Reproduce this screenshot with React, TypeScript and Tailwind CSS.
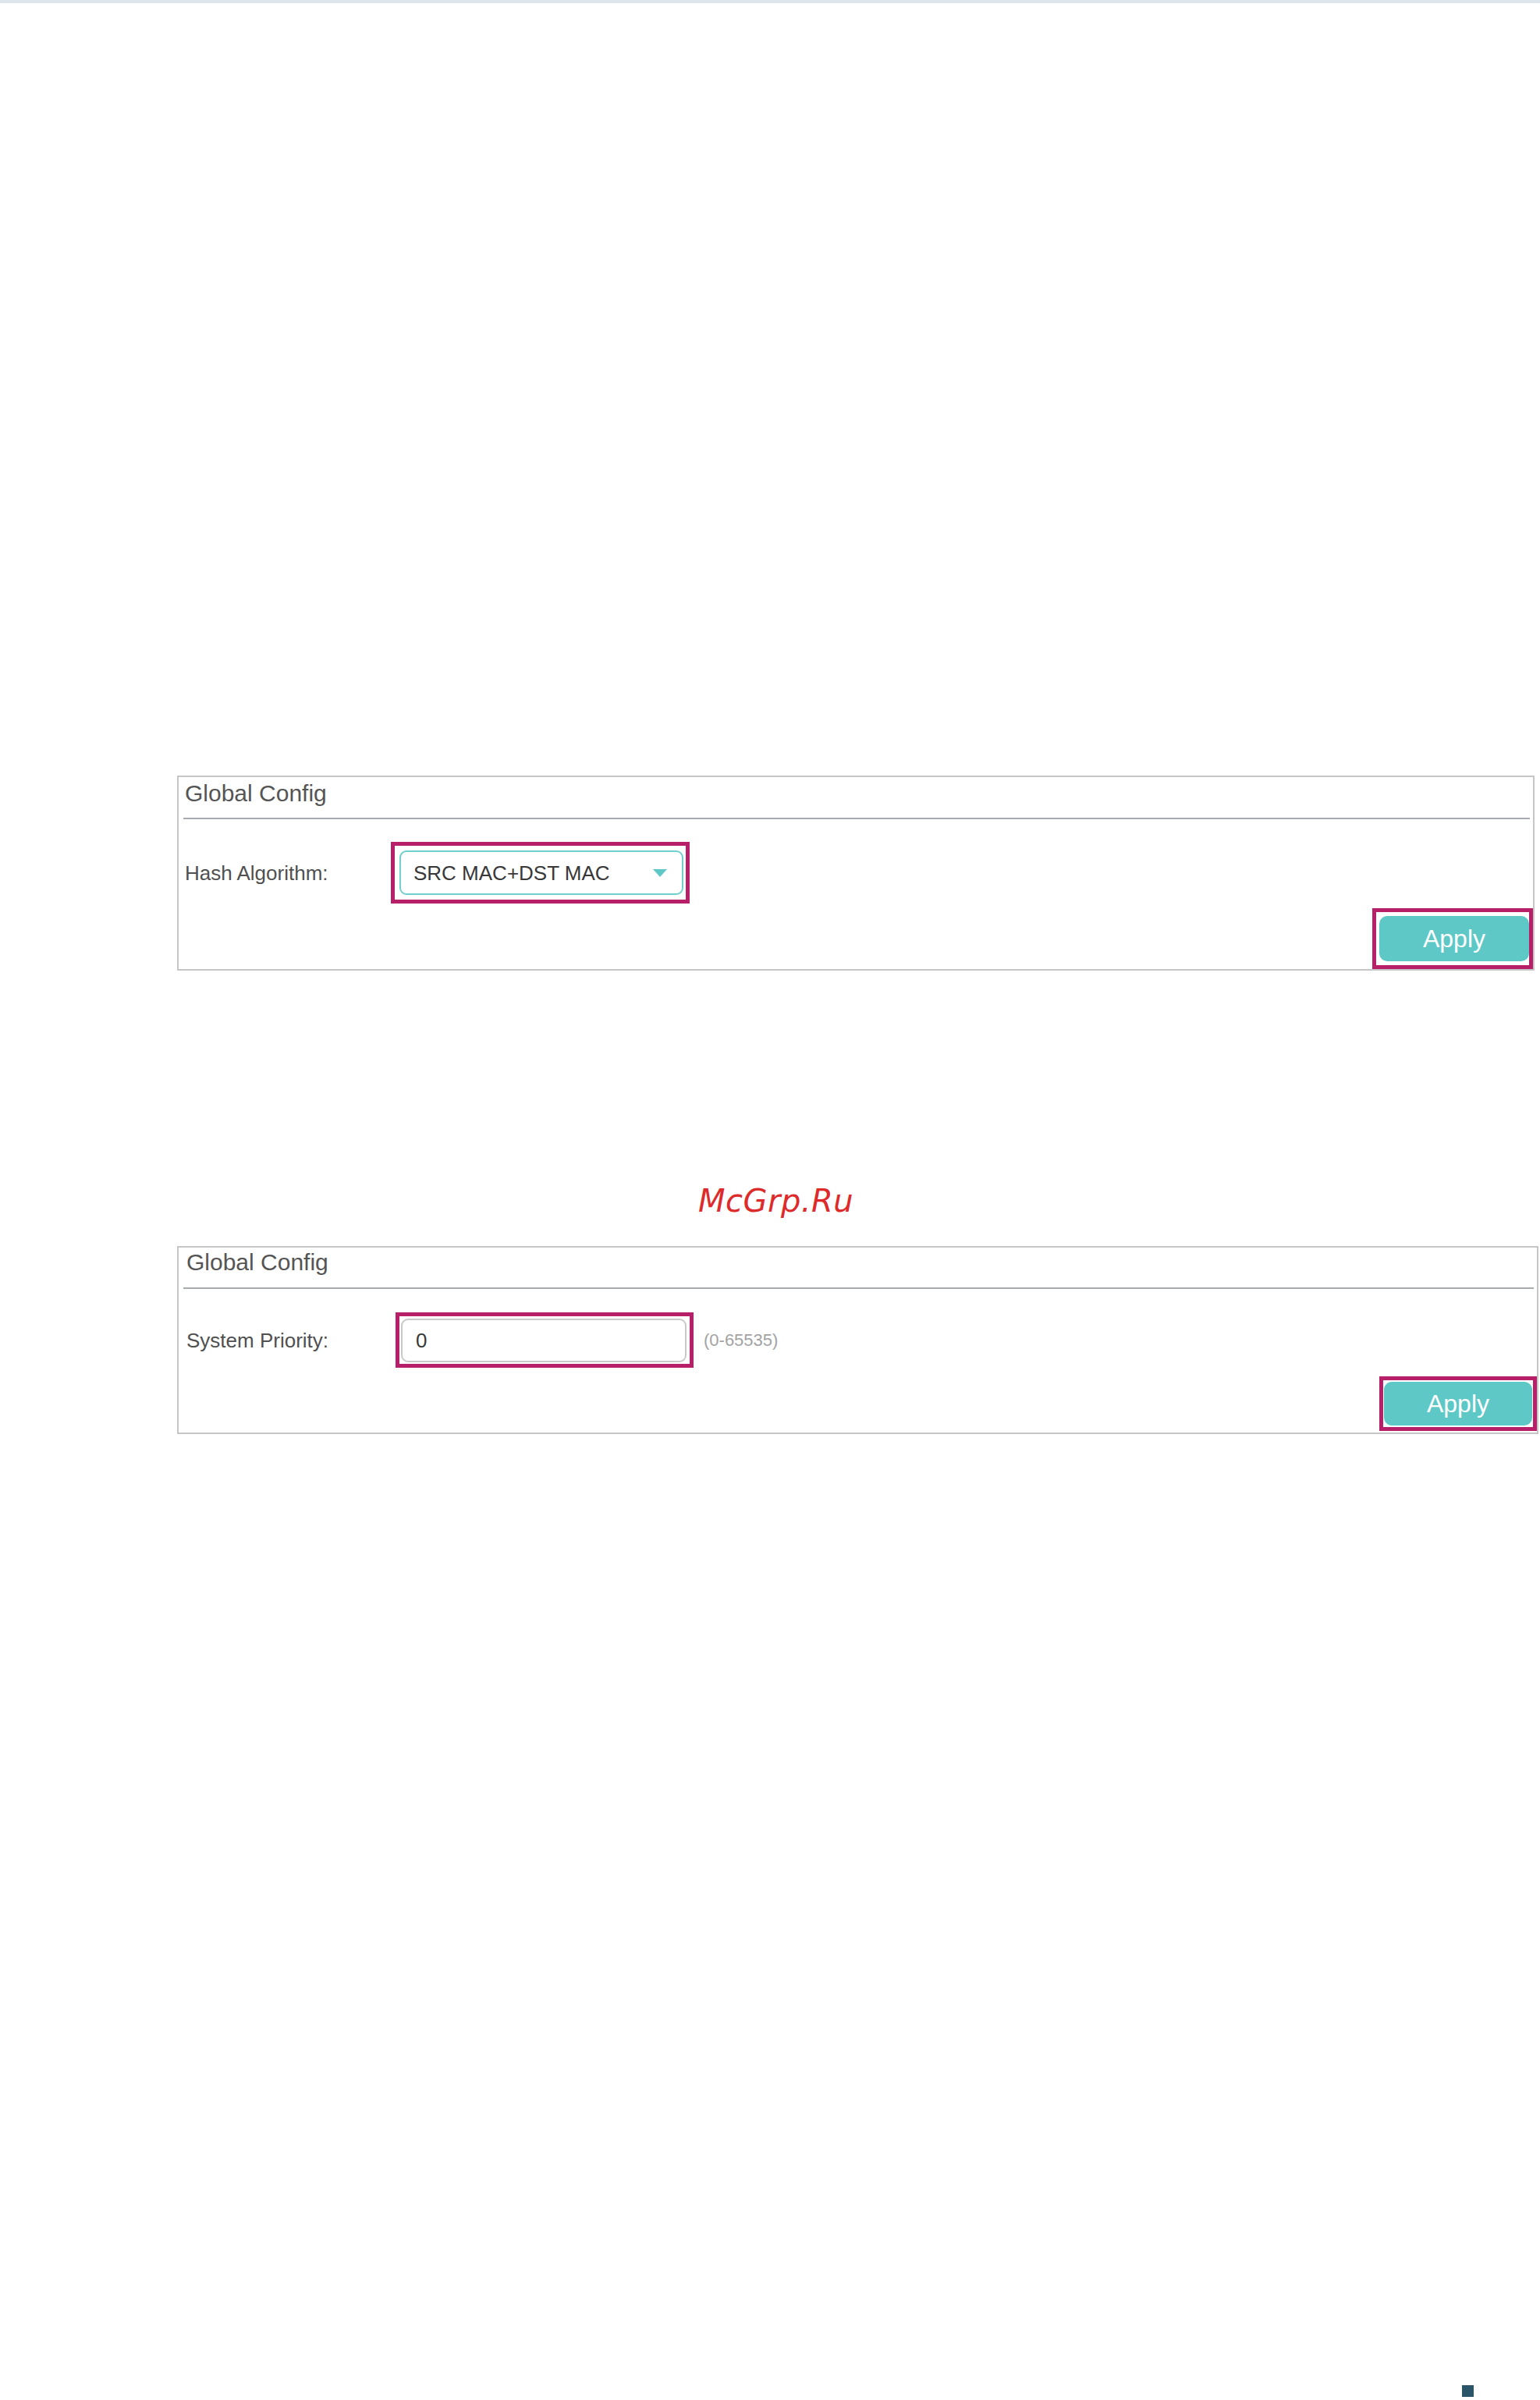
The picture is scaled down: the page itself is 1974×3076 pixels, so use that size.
import React from "react";

const font = "font-['Liberation_Sans',Arial,sans-serif]";

function Highlight({
  className,
  children,
}: {
  className: string;
  children: React.ReactNode;
}) {
  return (
    <div className={`flex border-[5px] border-[#b81f69] ${className}`}>
      {children}
    </div>
  );
}

function PanelHeader({ pl, pt, gap }: { pl: string; pt: string; gap: string }) {
  return (
    <>
      <div className={`text-[30px] leading-none text-[#555555] ${pl} ${pt}`}>
        Global Config
      </div>
      <div className={`ml-[6px] mr-[4px] h-[2px] bg-[#a7abaf] ${gap}`} />
    </>
  );
}

export default function App() {
  return (
    <div className={`relative h-[3076px] w-[1974px] bg-white ${font}`}>
      <div className="h-[4px] bg-[#dce6ec]" />

      {/* Hash algorithm panel */}
      <div className="ml-[227px] mt-[990px] flex h-[250px] w-[1740px] flex-col border-2 border-[#c6c6c6]">
        <PanelHeader pl="pl-[8px]" pt="pt-[6px]" gap="mt-[16px]" />
        <div className="mt-[29px] flex items-center">
          <div className="w-[272px] pl-[8px] text-[26px] leading-none text-[#505050]">
            Hash Algorithm:
          </div>
          <Highlight className="h-[79px] w-[383px] items-center pl-[6px]">
            <div className="flex h-[57px] w-[364px] items-center justify-between rounded-[9px] border-2 border-[#6fd0cd] pl-[16px] pr-[19px] text-[26px] leading-none text-[#383838]">
              <span>SRC MAC+DST MAC</span>
              <svg width="18" height="10" viewBox="0 0 18 10">
                <path d="M0 0 H18 L9 10 Z" fill="#5ec8c6" />
              </svg>
            </div>
          </Highlight>
        </div>
        <div className="mt-auto flex justify-end">
          <Highlight className="h-[78px] w-[206px] items-center justify-center pl-[4px]">
            <button
              type="button"
              className="h-[58px] w-[193px] rounded-[10px] bg-[#5ec8c6] text-[32px] leading-none text-white"
            >
              Apply
            </button>
          </Highlight>
        </div>
      </div>

      {/* watermark */}
      <div className="ml-[895px] mt-[275px] font-['DejaVu_Sans',sans-serif] text-[40px] italic leading-none tracking-[0.5px] text-[#dd2b2b]">
        McGrp.Ru
      </div>

      {/* System priority panel */}
      <div className="ml-[227px] mt-[38px] flex h-[241px] w-[1745px] flex-col border-2 border-[#c6c6c6]">
        <PanelHeader pl="pl-[10px]" pt="pt-[4px]" gap="mt-[17px]" />
        <div className="mt-[30px] flex items-center">
          <div className="w-[278px] pl-[10px] text-[26px] leading-none text-[#505050]">
            System Priority:
          </div>
          <Highlight className="h-[71px] w-[382px] items-center pl-[2px]">
            <div className="flex h-[56px] w-[366px] items-center rounded-[9px] border-2 border-[#c9c9c9] pl-[17px] text-[26px] leading-none text-[#383838]">
              0
            </div>
          </Highlight>
          <span className="ml-[13px] text-[22px] leading-none text-[#a3a3a3]">
            (0-65535)
          </span>
        </div>
        <div className="mb-[2px] mt-auto flex justify-end">
          <Highlight className="h-[70px] w-[202px] items-center justify-center">
            <button
              type="button"
              className="h-[56px] w-[190px] rounded-[10px] bg-[#5ec8c6] text-[32px] leading-none text-white"
            >
              Apply
            </button>
          </Highlight>
        </div>
      </div>

      <div className="ml-[1874px] mt-[1219px] h-[15px] w-[15px] bg-[#2b5568]" />
    </div>
  );
}
